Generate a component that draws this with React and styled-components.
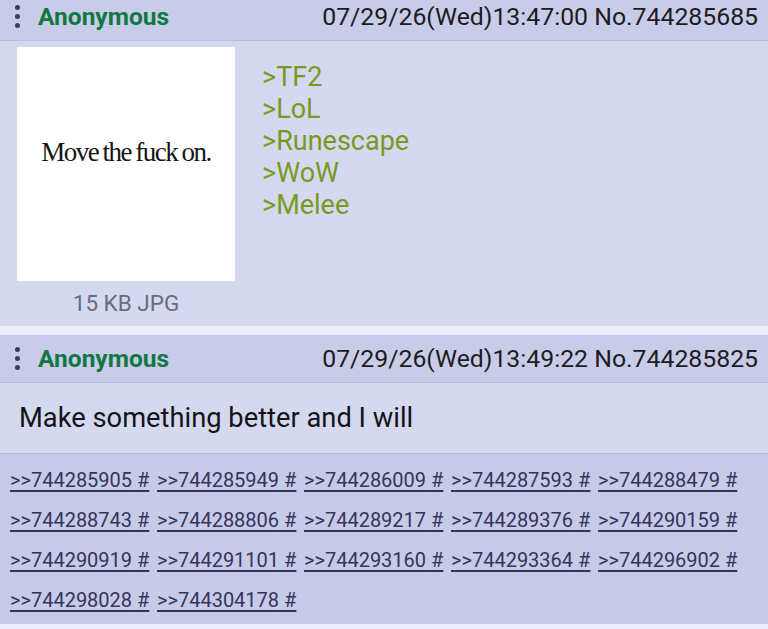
import React from 'react';
import styled, { createGlobalStyle } from 'styled-components';

const GlobalStyle = createGlobalStyle`
  body {
    margin: 0;
    background: #eceffb;
    font-family: Roboto, "Liberation Sans", sans-serif;
  }
`;

/* Thread wrapper */
const Thread = styled.div`
  display: flex;
  flex-direction: column;
  gap: 9px;
  width: 768px;
`;

const Post = styled.div`
  display: flex;
  flex-direction: column;
  background: #d5d9f0;
`;

/* Name / date bar on top of each post */
const PostHeader = styled.div`
  display: flex;
  align-items: center;
  height: ${(p) => (p.$short ? '41px' : '48px')};
  padding: ${(p) => (p.$short ? '0 10px 7px 15px' : '0 10px 0 15px')};
  box-sizing: border-box;
  background: #c9cce9;
  border-bottom: 1px solid #b9bddd;
`;

const MenuDots = styled.div`
  display: flex;
  flex-direction: column;
  gap: 4px;
  margin-right: 18px;

  span {
    width: 5px;
    height: 5px;
    border-radius: 50%;
    background: #3d3d5c;
  }
`;

const Name = styled.span`
  color: #117743;
  font-weight: bold;
  font-size: 24.5px;
`;

const Meta = styled.span`
  margin-left: auto;
  color: #1c1c22;
  font-size: 24.8px;
`;

const PostBody = styled.div`
  display: flex;
  padding: ${(p) => p.$pad || '6px 17px 9px'};
`;

const FileColumn = styled.div`
  display: flex;
  flex-direction: column;
  align-items: center;
  width: 218px;
`;

const Thumb = styled.div`
  display: flex;
  align-items: center;
  justify-content: center;
  width: 218px;
  height: 234px;
  padding-bottom: 24px;
  box-sizing: border-box;
  background: #ffffff;
  font-family: "Liberation Serif", "DejaVu Serif", serif;
  font-size: 27px;
  letter-spacing: -1.5px;
  word-spacing: -1px;
  color: #151515;
`;

const FileInfo = styled.div`
  margin-top: 8px;
  font-size: 22.5px;
  line-height: 28px;
  color: #6a6b7e;
`;

const Comment = styled.div`
  display: flex;
  flex-direction: column;
  margin: 14px 0 0 27px;
  font-size: 27px;
  line-height: 32px;
`;

const Quote = styled.span`
  color: #789922;
`;

const Text = styled.div`
  font-size: 27.3px;
  line-height: 32px;
  color: #141418;
`;

/* Replies strip under the post */
const Replies = styled.div`
  display: flex;
  flex-wrap: wrap;
  gap: 14px 9px;
  padding: 13px 10px 11px;
  background: #c8cbe8;
  border-top: 1px solid #b9bddd;
  min-height: 170px;
  box-sizing: border-box;
  align-content: flex-start;
`;

const ReplyLink = styled.a`
  width: 138px;
  font-size: 20px;
  line-height: 26px;
  color: #34345c;
  text-decoration: underline;
  text-underline-offset: 3px;
  white-space: nowrap;
`;

const greens = ['TF2', 'LoL', 'Runescape', 'WoW', 'Melee'];

const replies = [
  '744285905', '744285949', '744286009', '744287593', '744288479',
  '744288743', '744288806', '744289217', '744289376', '744290159',
  '744290919', '744291101', '744293160', '744293364', '744296902',
  '744298028', '744304178',
];

const Dots = () => (
  <MenuDots>
    <span />
    <span />
    <span />
  </MenuDots>
);

export default function App() {
  return (
    <>
      <GlobalStyle />
      <Thread>
        <Post>
          <PostHeader $short>
            <Dots />
            <Name>Anonymous</Name>
            <Meta>07/29/26(Wed)13:47:00 No.744285685</Meta>
          </PostHeader>
          <PostBody $pad="6px 17px 9px">
            <FileColumn>
              <Thumb>Move the fuck on.</Thumb>
              <FileInfo>15 KB JPG</FileInfo>
            </FileColumn>
            <Comment>
              {greens.map((g) => (
                <Quote key={g}>&gt;{g}</Quote>
              ))}
            </Comment>
          </PostBody>
        </Post>

        <Post>
          <PostHeader>
            <Dots />
            <Name>Anonymous</Name>
            <Meta>07/29/26(Wed)13:49:22 No.744285825</Meta>
          </PostHeader>
          <PostBody $pad="19px 19px 19px">
            <Text>Make something better and I will</Text>
          </PostBody>
          <Replies>
            {replies.map((r) => (
              <ReplyLink key={r} href="#">&gt;&gt;{r} #</ReplyLink>
            ))}
          </Replies>
        </Post>
      </Thread>
    </>
  );
}
